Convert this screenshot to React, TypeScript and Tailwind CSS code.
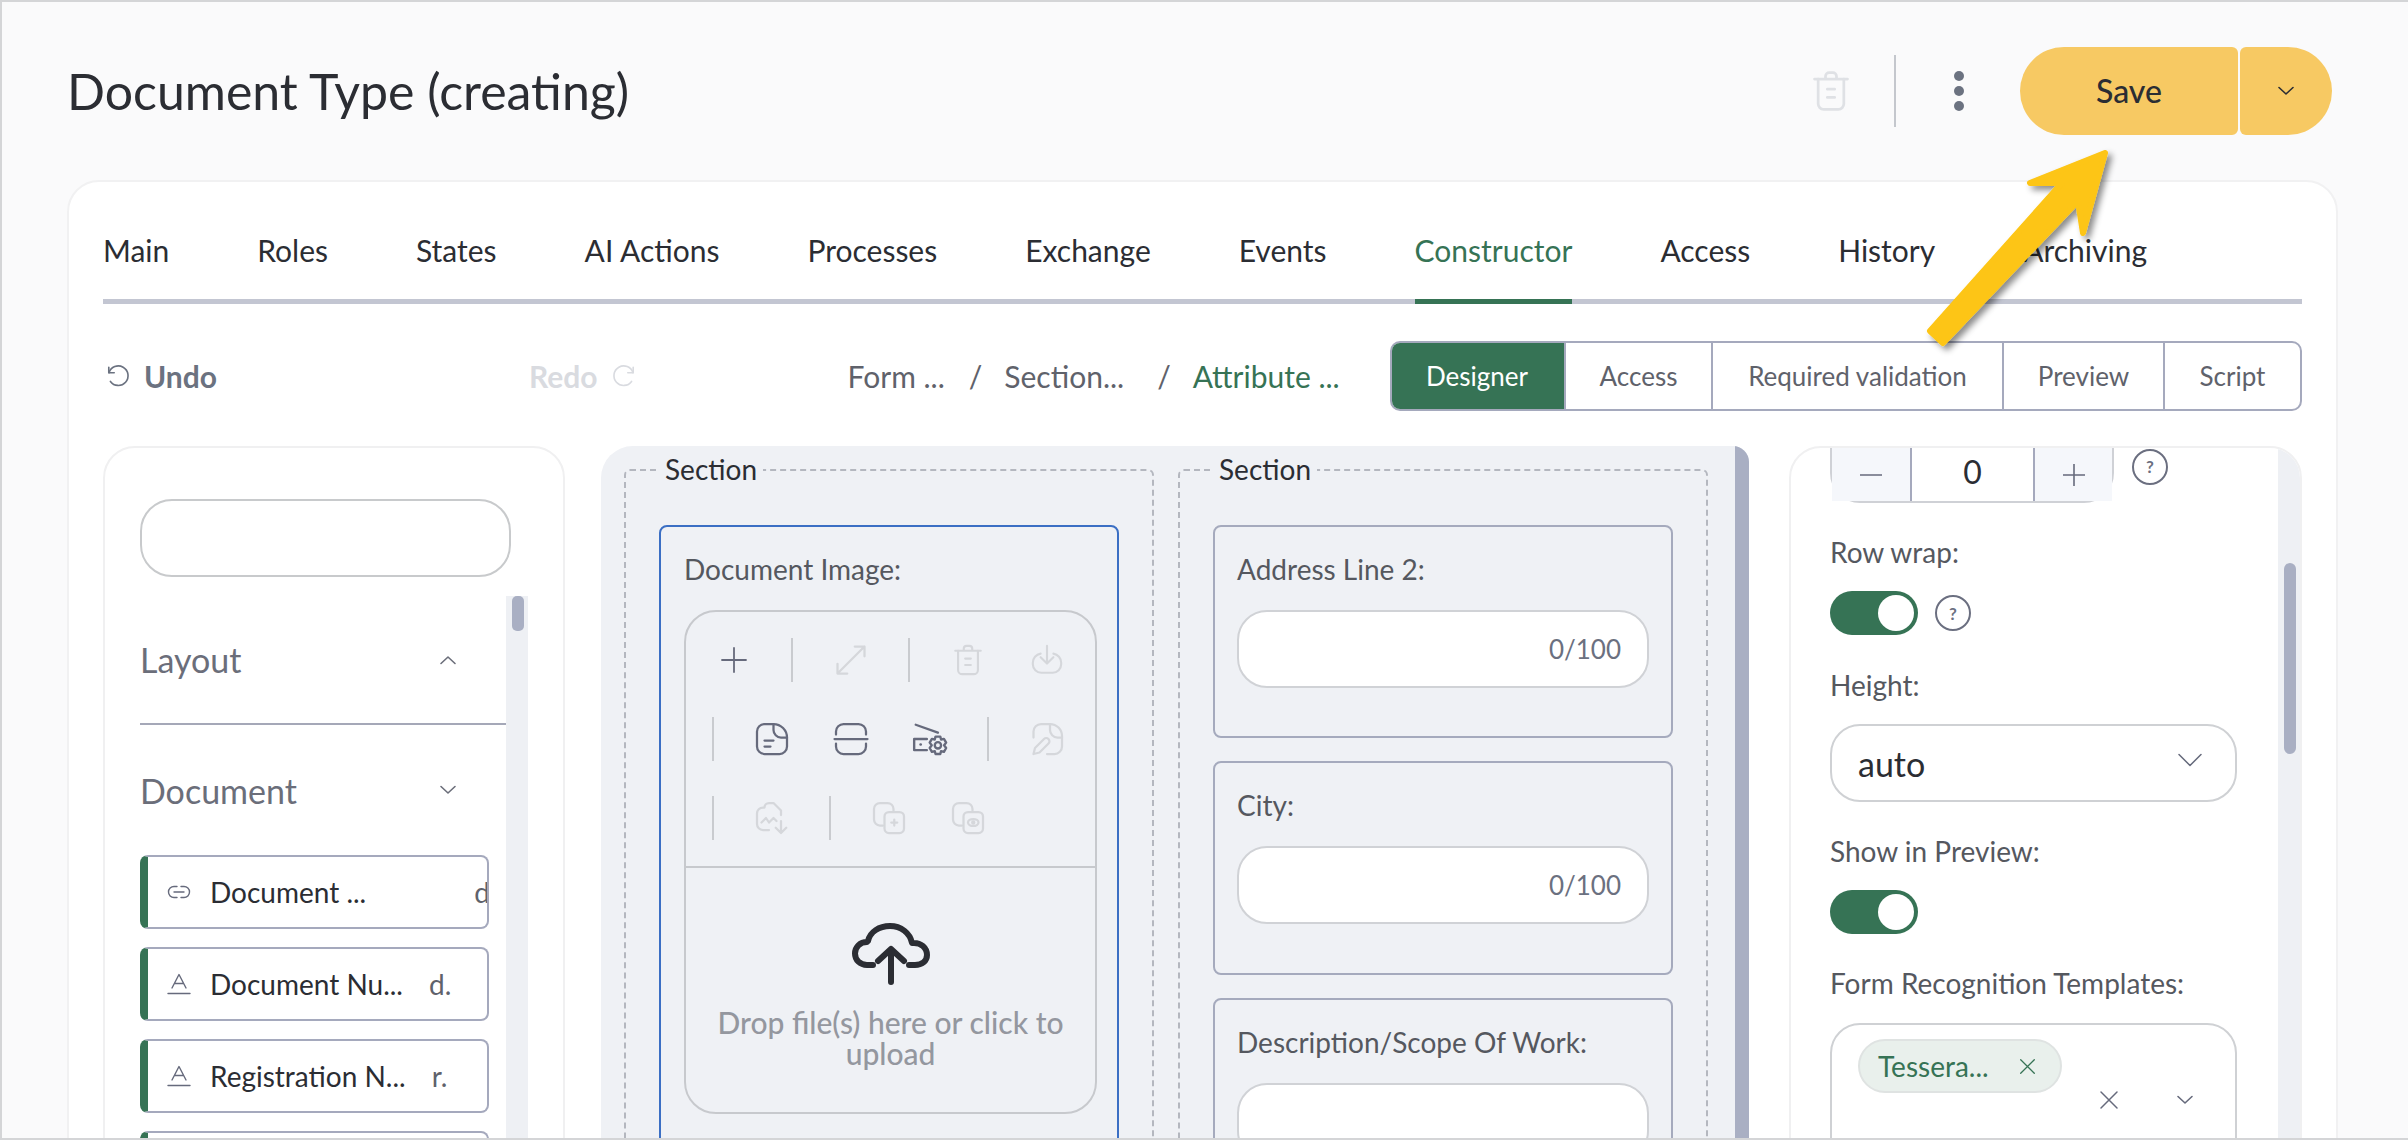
import { Check } from "lucide-react";

const FONT = "font-['Lato','Noto_Sans',sans-serif]";

const tabs = ["Main", "Roles", "States", "AI Actions", "Processes", "Exchange", "Events", "Constructor", "Access", "History", "Archiving"];

const modes = [
  { label: "Designer", w: "w-[174px]" },
  { label: "Access", w: "w-[147px]" },
  { label: "Required validation", w: "w-[291px]" },
  { label: "Preview", w: "w-[161px]" },
  { label: "Script", w: "w-[137px]" },
];

const palette = [
  { icon: "link", name: "Document ...", code: "d...", gap: "w-[108px]" },
  { icon: "text", name: "Document Nu...", code: "d.", gap: "w-[26px]" },
  { icon: "text", name: "Registration N...", code: "r.", gap: "w-[26px]" },
];

function Svg({ children, className, size = 32 }: { children: React.ReactNode; className?: string; size?: number }) {
  return (
    <svg width={size} height={size} viewBox="0 0 24 24" fill="none" stroke="currentColor" strokeWidth="1.5" strokeLinecap="round" strokeLinejoin="round" className={className}>
      {children}
    </svg>
  );
}

function Chevron({ up, className }: { up?: boolean; className?: string }) {
  return (
    <svg width="18" height="10" viewBox="0 0 18 10" fill="none" stroke="currentColor" strokeWidth="1.6" strokeLinecap="round" strokeLinejoin="round" className={className}>
      <path d={up ? "M2 8.5 9 2l7 6.5" : "M2 1.5 9 8l7-6.5"} />
    </svg>
  );
}

function Cross({ size = 20, className }: { size?: number; className?: string }) {
  return (
    <svg width={size} height={size} viewBox="0 0 20 20" fill="none" stroke="currentColor" strokeWidth="1.5" strokeLinecap="round" className={className}>
      <path d="M2 2l16 16M18 2 2 18" />
    </svg>
  );
}

function TrashIcon({ size = 32, className }: { size?: number; className?: string }) {
  return (
    <Svg size={size} className={className}>
      <path d="M3 5.5h18M9 5.5V4a2 2 0 0 1 2-2h2a2 2 0 0 1 2 2v1.5" />
      <path d="M5 5.5V19a3 3 0 0 0 3 3h8a3 3 0 0 0 3-3V5.5" />
      <path d="M10 11h4M10 15.5h4" />
    </Svg>
  );
}

function Sep() {
  return <div className="mx-[18px] h-[44px] w-[2px] bg-[#c9cbcf]" />;
}

function Tool({ children, off }: { children: React.ReactNode; off?: boolean }) {
  return <div className={`flex h-[79px] w-[79px] items-center justify-center ${off ? "text-[#d5d7db]" : "text-[#666a7c]"}`}>{children}</div>;
}

function Help() {
  return <div className="flex h-[36px] w-[36px] items-center justify-center rounded-full border-2 border-[#6b6f80] text-[17px] font-bold leading-none text-[#6b6f80]">?</div>;
}

function Toggle() {
  return (
    <div className="flex h-[44px] w-[88px] items-center justify-end rounded-full bg-[#367355] pr-[4px]">
      <div className="h-[36px] w-[36px] rounded-full bg-white" />
    </div>
  );
}

function Section({ children }: { children: React.ReactNode }) {
  return (
    <div className="relative h-[700px] rounded-[6px] border-2 border-dashed border-[#b4b7bf] px-[33px] pt-[54px]">
      <span className="absolute left-[33px] top-[-20px] bg-[#eff1f5] px-[6px] text-[28px] leading-[36px] text-[#2b2d33]">Section</span>
      {children}
    </div>
  );
}

function TextField({ label, counter, h }: { label: string; counter?: boolean; h: string }) {
  return (
    <div className={`${h} rounded-[8px] border-2 border-[#a5aabd] px-[22px] pt-[24px]`}>
      <div className="h-[36px] text-[28px] leading-[36px] text-[#55585f]">{label}</div>
      <div className="mt-[23px] flex h-[78px] items-center justify-end rounded-[30px] border-2 border-[#d0d2d6] bg-white pr-[26px] text-[26px] text-[#6b7080]">
        {counter && "0/100"}
      </div>
    </div>
  );
}

function PaletteItem({ icon, name, code, gap }: { icon: string; name: string; code: string; gap: string }) {
  return (
    <div className="flex h-[74px] w-[349px] items-center overflow-hidden rounded-[8px] border-2 border-l-[8px] border-[#a5a9bd] border-l-[#367355] pl-[19px] text-[28px]">
      <div className="flex w-[24px] justify-center text-[#666a7c]">
        {icon === "link" ? (
          <svg width="24" height="14" viewBox="0 0 24 14" fill="none" stroke="currentColor" strokeWidth="1.4" strokeLinecap="round">
            <path d="M10 1.5H7a5.5 5.5 0 0 0 0 11h3M14 1.5h3a5.5 5.5 0 0 1 0 11h-3M7 7h10" />
          </svg>
        ) : (
          <svg width="24" height="22" viewBox="0 0 24 22" fill="none" stroke="currentColor" strokeWidth="1.4" strokeLinecap="round" strokeLinejoin="round">
            <path d="M5 15 12 1.5 19 15M7.5 10.5h9M1 20.5h22" />
          </svg>
        )}
      </div>
      <span className="ml-[19px] whitespace-nowrap text-[#2b2d33]">{name}</span>
      <span className={`shrink-0 ${gap}`} />
      <span className="text-[#5f626b]">{code}</span>
    </div>
  );
}

export default function App() {
  return (
    <div className={`${FONT} relative h-[1140px] w-[2408px] overflow-hidden border-y-2 border-l-2 border-[#d4d5d7] bg-[#fafafb] text-[#2b2d33]`}>
      <div className="absolute left-[1066px] top-[-2px] h-[2px] w-[394px] bg-[#367355]" />

      {/* Header */}
      <div className="flex h-[178px] items-start pl-[65px] pr-[76px] pt-[45px]">
        <h1 className="text-[50px] leading-[88px] text-[#2b2d33]">Document Type (creating)</h1>
        <div className="ml-auto flex h-[88px] items-center">
          <TrashIcon size={44} className="text-[#dfe1e5]" />
          <div className="ml-[41px] h-[72px] w-[2px] bg-[#c4c7cd]" />
          <div className="ml-[58px] flex w-[10px] flex-col gap-[5px]">
            <span className="h-[10px] w-[10px] rounded-full bg-[#6b7280]" />
            <span className="h-[10px] w-[10px] rounded-full bg-[#6b7280]" />
            <span className="h-[10px] w-[10px] rounded-full bg-[#6b7280]" />
          </div>
          <div className="ml-[56px] flex h-[88px] w-[218px] items-center justify-center rounded-l-[44px] rounded-r-[6px] bg-[#f7c963] text-[32px] font-medium">Save</div>
          <div className="ml-[2px] flex h-[88px] w-[92px] items-center justify-center rounded-l-[6px] rounded-r-[44px] bg-[#f7c963]">
            <Chevron className="text-[#2b2d33]" />
          </div>
        </div>
      </div>

      {/* Card */}
      <div className="ml-[65px] h-[1000px] w-[2271px] rounded-[32px] border-2 border-[#f1f1f2] bg-white pl-[34px] pr-[34px]">
        <div className="flex h-[122px] items-end gap-[88px] border-b-[5px] border-[#c3c6d2]">
          {tabs.map((t) => (
            <div
              key={t}
              className={`-mb-[5px] flex h-[82px] items-start whitespace-nowrap border-b-[5px] pt-[8px] text-[30px] leading-[40px] ${
                t === "Constructor" ? "border-[#367355] text-[#367355]" : "border-transparent text-[#2b2d33]"
              }`}
            >
              {t}
            </div>
          ))}
        </div>

        {/* Toolbar */}
        <div className="mt-[37px] flex h-[70px] items-center text-[30px]">
          <div className="flex items-center pl-[2px] text-[#6b7280]">
            <Svg size={26} className="mr-[13px]">
              <path d="M3.5 4v5h5" />
              <path d="M3.7 9A9 9 0 1 1 5 17" />
            </Svg>
            <span className="font-bold">Undo</span>
          </div>
          <div className="ml-[312px] flex items-center text-[#d9dbe0]">
            <span className="font-bold">Redo</span>
            <Svg size={26} className="ml-[13px]">
              <path d="M20.5 4v5h-5" />
              <path d="M20.3 9A9 9 0 1 0 19 17" />
            </Svg>
          </div>
          <div className="ml-[211px] flex items-center text-[#5f626b]">
            <span>Form ...</span>
            <span className="ml-[24px]">/</span>
            <span className="ml-[22px]">Section...</span>
            <span className="ml-[33px]">/</span>
            <span className="ml-[22px] text-[#367355]">Attribute ...</span>
          </div>
          <div className="ml-auto flex h-[70px] overflow-hidden rounded-[10px] border-2 border-[#a5a9bd] text-[26px] text-[#5f626b]">
            {modes.map((m, i) => (
              <div
                key={m.label}
                className={`flex items-center justify-center ${m.w} ${i > 0 ? "border-l-2 border-[#a5a9bd]" : ""} ${
                  i === 0 ? "-my-[2px] -ml-[2px] bg-[#367355] text-white" : ""
                }`}
              >
                {m.label}
              </div>
            ))}
          </div>
        </div>

        {/* Workspace */}
        <div className="mt-[35px] flex h-[800px] items-start">
          {/* Palette */}
          <div className="h-full w-[462px] shrink-0 rounded-[32px] border-2 border-[#f0f0f1] pl-[35px] pt-[51px]">
            <div className="h-[78px] w-[371px] rounded-[32px] border-2 border-[#c8cacc]" />
            <div className="mt-[19px] flex h-[600px]">
              <div className="w-[366px] shrink-0">
                <div className="flex h-[129px] items-center border-b-2 border-[#a5a8b8] pr-[49px] text-[34px] text-[#6b6e7a]">
                  <span>Layout</span>
                  <Chevron up className="ml-auto" />
                </div>
                <div className="flex h-[130px] items-center pb-[0px] pr-[49px] text-[34px] text-[#6b6e7a]">
                  <span>Document</span>
                  <Chevron className="ml-auto" />
                </div>
                <div className="flex flex-col gap-[18px]">
                  {palette.map((p) => (
                    <PaletteItem key={p.name} {...p} />
                  ))}
                  <PaletteItem icon="text" name="" code="" gap="" />
                </div>
              </div>
              <div className="h-full w-[22px] bg-[#eef0f4] px-[6px]">
                <div className="h-[35px] w-[12px] rounded-[5px] bg-[#a9afc3]" />
              </div>
            </div>
          </div>

          {/* Canvas */}
          <div className="relative ml-[36px] flex h-full w-[1148px] shrink-0 overflow-hidden rounded-tl-[32px] rounded-tr-[16px] bg-[#eff1f5] pr-[14px] pt-[23px]">
            <div className="grid w-full grid-cols-[530px_530px] gap-[24px] pl-[23px]">
              <Section>
                <div className="-mx-[0px] h-[700px] rounded-[8px] border-2 border-[#3b6fc4] px-[23px] pt-[24px]">
                  <div className="h-[36px] text-[28px] leading-[36px] text-[#55585f]">Document Image:</div>
                  <div className="mt-[23px] h-[504px] w-[413px] rounded-[32px] border-2 border-[#c7c9cd]">
                    <div className="flex h-[256px] flex-wrap content-start items-center border-b-2 border-[#c7c9cd] pl-[8px] pt-[8px]">
                      <Tool>
                        <svg width="26" height="26" viewBox="0 0 26 26" stroke="currentColor" strokeWidth="1.8" strokeLinecap="round"><path d="M13 1v24M1 13h24" /></svg>
                      </Tool>
                      <Sep />
                      <Tool off>
                        <Svg size={36}>
                          <path d="M14.5 3H21v6.5M21 3 3 21M3 14.5V21h6.5" />
                        </Svg>
                      </Tool>
                      <Sep />
                      <Tool off>
                        <TrashIcon size={34} />
                      </Tool>
                      <Tool off>
                        <Svg size={34}>
                          <path d="M12 2v12M7.5 10 12 14.5 16.5 10" />
                          <path d="M7.5 7.5A6.5 6.5 0 0 0 2 14v1a6 6 0 0 0 6 6h8a6 6 0 0 0 6-6v-1a6.5 6.5 0 0 0-5.5-6.5" />
                        </Svg>
                      </Tool>
                      <Sep />
                      <Tool>
                        <Svg size={36}>
                          <path d="M13 2H7a5 5 0 0 0-5 5v10a5 5 0 0 0 5 5h10a5 5 0 0 0 5-5v-6a9 9 0 0 0-9-9Z" />
                          <path d="M13 2v4a5 5 0 0 0 5 5h4M7 13h6M7 17h4" />
                        </Svg>
                      </Tool>
                      <Tool>
                        <Svg size={36}>
                          <path d="M2 9V7a5 5 0 0 1 5-5h10a5 5 0 0 1 5 5v2M2 15v2a5 5 0 0 0 5 5h10a5 5 0 0 0 5-5v-2M1 12h22" />
                        </Svg>
                      </Tool>
                      <Tool>
                        <Svg size={38}>
                          <path d="M3 3l14 5M10 12H2v7h8" />
                          <path d="M6 15.5h.2" />
                          <circle cx="17" cy="16" r="2" />
                          <path d="M15.5 10.5h3l.5 1.8 1.8-.4 1.4 2.4-1.3 1.7 1.3 1.7-1.4 2.4-1.8-.4-.5 1.8h-3l-.5-1.8-1.8.4-1.4-2.4 1.3-1.7-1.3-1.7 1.4-2.4 1.8.4Z" />
                        </Svg>
                      </Tool>
                      <Sep />
                      <Tool off>
                        <Svg size={36}>
                          <path d="M3 11V7a5 5 0 0 1 5-5h6a8 8 0 0 1 8 8v7a5 5 0 0 1-5 5h-5" />
                          <path d="M14 2v4a5 5 0 0 0 5 5h3" />
                          <path d="M3 22l1-4 6-6a2 2 0 0 1 3 3l-6 6Z" />
                        </Svg>
                      </Tool>
                      <Sep />
                      <Tool off>
                        <Svg size={36}>
                          <path d="M10 20H6a4 4 0 0 1-4-4V9a4 4 0 0 1 4-4h1M7 5a3 3 0 0 1 3-3h3l5 5v3" />
                          <path d="M5 15l3-3 2 3 3-3 2 2M18 14v8M14.5 18.5 18 22l3.5-3.5" />
                        </Svg>
                      </Tool>
                      <Sep />
                      <Tool off>
                        <Svg size={36}>
                          <path d="M8 17H6a4 4 0 0 1-4-4V6a4 4 0 0 1 4-4h5a4 4 0 0 1 4 4v1" />
                          <rect x="9" y="8" width="13" height="14" rx="3" />
                          <path d="M15.5 13v4M13.5 15h4" />
                        </Svg>
                      </Tool>
                      <Tool off>
                        <Svg size={36}>
                          <path d="M8 17H6a4 4 0 0 1-4-4V6a4 4 0 0 1 4-4h5a4 4 0 0 1 4 4v1" />
                          <rect x="9" y="8" width="13" height="14" rx="3" />
                          <ellipse cx="15.5" cy="15" rx="3.5" ry="2.3" />
                          <circle cx="15.5" cy="15" r=".7" />
                        </Svg>
                      </Tool>
                    </div>
                    <div className="flex flex-col items-center pt-[55px] text-center">
                      <svg width="78" height="62" viewBox="0 0 78 62" fill="none" stroke="#2b2d33" strokeWidth="6" strokeLinecap="round" strokeLinejoin="round">
                        <path d="M21 42H15C8 42 3 37 3 30.5 3 24 8 19 15 19c0 0 1-1 1-1C18 9 27 3 38 3c11 0 20 7 22 17 9-1 15 5 15 12 0 6-5 10-12 10h-6" />
                        <path d="M39 59V27M26 38l13-12 13 12" />
                      </svg>
                      <div className="mt-[22px] w-[360px] text-[30px] font-medium leading-[31px] text-[#94979f]">Drop file(s) here or click to upload</div>
                    </div>
                  </div>
                </div>
              </Section>
              <Section>
                <div className="flex flex-col gap-[23px]">
                  <TextField label="Address Line 2:" counter h="h-[213px]" />
                  <TextField label="City:" counter h="h-[214px]" />
                  <TextField label="Description/Scope Of Work:" h="h-[300px]" />
                </div>
              </Section>
            </div>
            <div className="absolute right-0 top-0 h-full w-[14px] bg-[#a9afc3]" />
          </div>

          {/* Properties */}
          <div className="ml-[40px] flex h-full w-[513px] shrink-0 overflow-hidden rounded-[32px] border-2 border-[#f0f0f1]">
            <div className="w-[487px] shrink-0 pl-[39px] text-[28px] text-[#55585f]">
              <div className="flex items-center">
                <div className="flex h-[55px] w-[284px] items-center rounded-b-[30px] border-x-2 border-b-2 border-[#cfd1d6] text-[#2b2d33]">
                  <div className="flex h-full w-[80px] items-center justify-center border-r-2 border-[#a5a9bd] bg-[#f5f7fb] text-[#666a7c]">
                    <svg width="22" height="2" viewBox="0 0 22 2"><path d="M0 1h22" stroke="currentColor" strokeWidth="1.6" /></svg>
                  </div>
                  <div className="flex h-full flex-1 items-center justify-center pb-[6px] text-[32px]">0</div>
                  <div className="flex h-full w-[79px] items-center justify-center border-l-2 border-[#a5a9bd] bg-[#f5f7fb] text-[#666a7c]">
                    <svg width="22" height="22" viewBox="0 0 22 22"><path d="M0 11h22M11 0v22" stroke="currentColor" strokeWidth="1.6" /></svg>
                  </div>
                </div>
                <div className="-mt-[18px] ml-[18px]"><Help /></div>
              </div>
              <div className="mt-[31px] leading-[36px]">Row wrap:</div>
              <div className="mt-[21px] flex items-center gap-[17px]">
                <Toggle />
                <Help />
              </div>
              <div className="mt-[32px] leading-[36px]">Height:</div>
              <div className="mt-[21px] flex h-[78px] w-[407px] items-center rounded-[30px] border-2 border-[#cfd1d4] pl-[26px] pr-[33px] text-[34px] text-[#2b2d33]">
                <span>auto</span>
                <svg width="24" height="14" viewBox="0 0 24 14" fill="none" stroke="#666a7c" strokeWidth="1.5" strokeLinecap="round" strokeLinejoin="round" className="-mt-[6px] ml-auto"><path d="M1 1.5 12 12.5 23 1.5" /></svg>
              </div>
              <div className="mt-[31px] leading-[36px]">Show in Preview:</div>
              <div className="mt-[21px]"><Toggle /></div>
              <div className="mt-[31px] whitespace-nowrap leading-[36px]">Form Recognition Templates:</div>
              <div className="relative mt-[22px] h-[200px] w-[407px] rounded-[30px] border-2 border-[#cfd1d4] pl-[26px] pt-[14px]">
                <div className="flex h-[54px] w-[204px] items-center rounded-full border-2 border-[#dfe3e2] bg-[#e9f0ec] pl-[18px] text-[#367355]">
                  <span>Tessera...</span>
                  <Cross size={17} className="ml-[30px]" />
                </div>
                <Cross size={20} className="absolute left-[267px] top-[65px] text-[#666a7c]" />
                <Chevron className="absolute left-[344px] top-[70px] text-[#666a7c]" />
              </div>
            </div>
            <div className="h-full w-[24px] bg-[#eef0f4] pl-[6px] pt-[115px]">
              <div className="h-[191px] w-[12px] rounded-[6px] bg-[#a9afc3]" />
            </div>
          </div>
        </div>
      </div>

      {/* Annotation arrow */}
      <svg className="pointer-events-none absolute left-[1900px] top-[130px]" width="220" height="240" viewBox="1900 130 220 240" fill="none">
        <defs>
          <filter id="arrow-shadow" x="-20%" y="-20%" width="140%" height="140%">
            <feDropShadow dx="4" dy="4" stdDeviation="3" floodColor="#000" floodOpacity="0.45" />
          </filter>
        </defs>
        <path
          d="M2103 151 L2028 181 L2060 181 L1928 329 L1941 341 L2076 199 L2081 231 Z"
          fill="#fdc513"
          stroke="#fdc513"
          strokeWidth="6"
          strokeLinejoin="round"
          filter="url(#arrow-shadow)"
        />
      </svg>
    </div>
  );
}
